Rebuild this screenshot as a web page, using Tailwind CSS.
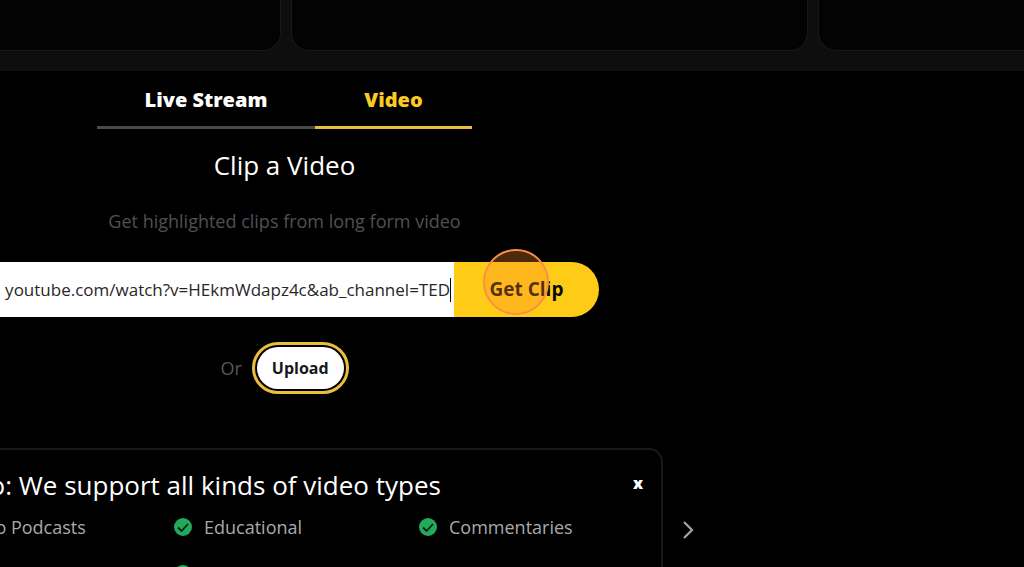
<!DOCTYPE html>
<html lang="en">
<head>
<meta charset="utf-8">
<title>Clip a Video</title>
<script src="https://cdn.jsdelivr.net/npm/@tailwindcss/browser@4"></script>
</head>
<body class="bg-black text-white font-['Open_Sans',sans-serif] h-screen overflow-hidden">
  <header class="bg-[#0e0e0e] pb-5 overflow-hidden">
    <div class="-ml-[237px] flex gap-[10px]">
      <div class="h-[51px] w-[518px] shrink-0 rounded-b-[18px] border border-t-0 border-[#18181b] bg-[#030303]"></div>
      <div class="h-[51px] w-[517px] shrink-0 rounded-b-[18px] border border-t-0 border-[#18181b] bg-[#030303]"></div>
      <div class="h-[51px] w-[518px] shrink-0 rounded-b-[18px] border border-t-0 border-[#18181b] bg-[#030303]"></div>
    </div>
  </header>

  <main class="-ml-[94px] flex w-[757px] flex-col items-center">
    <div role="tablist" class="flex text-xl font-extrabold">
      <button type="button" role="tab" aria-selected="false" class="h-[58px] w-[218px] border-b-3 border-[#4a4a4c] pt-0.5">Live Stream</button>
      <button type="button" role="tab" aria-selected="true" class="h-[58px] w-[157px] border-b-3 border-[#e9be3b] pt-0.5 text-[#fbca24]">Video</button>
    </div>

    <h1 class="mt-5 text-[26px] leading-8">Clip a Video</h1>
    <p class="mt-7 text-lg leading-6 text-[#4f5155]">Get highlighted clips from long form video</p>

    <form class="mt-[29px] flex h-[55px] w-[629px]">
      <label for="url" class="sr-only">Video link</label>
      <div class="relative flex min-w-0 flex-1">
        <input id="url" type="text" value="youtube.com/watch?v=HEkmWdapz4c&amp;ab_channel=TED" class="min-w-0 flex-1 rounded-l-full bg-white pr-1 text-right text-[17px] text-[#27272a] outline-none">
        <span class="absolute top-4 right-[3px] h-6 w-px bg-black"></span>
      </div>
      <button type="button" class="relative w-[145px] rounded-r-full bg-[#fecb17] text-[19px] font-bold text-[#0c0a04]">Get Clip
        <span class="absolute -top-[13px] left-[29px] size-[66px] rounded-full border-2 border-[#f98f45] bg-[#ff8c2e]/30"></span>
      </button>
    </form>

    <div class="mt-[25px] flex items-center gap-[10px]">
      <span class="text-lg text-[#55575c]">Or</span>
      <button type="button" class="h-[52px] rounded-full border-3 border-[#e9be3b] p-[2px]">
        <span class="flex h-full items-center rounded-full bg-white px-[15px] font-bold text-[#18181b]">Upload</span>
      </button>
    </div>

    <section class="relative mt-[54px] h-[200px] w-full rounded-[14px] border-2 border-[#18181b] pt-[17px] pl-[21px]">
      <div class="flex items-start justify-between pr-[18px] pl-2">
        <h2 class="text-[26px] leading-9 font-medium whitespace-nowrap">Video: We support all kinds of video types</h2>
        <button type="button" aria-label="Close" class="mt-1 text-base leading-6 font-extrabold">x</button>
      </div>
      <ul class="mt-3 grid grid-cols-[245px_245px_1fr] gap-y-[26px] text-lg leading-6 font-medium whitespace-nowrap text-[#a9a9ab]">
        <li class="flex items-center gap-3"><svg class="size-[18px]" viewBox="0 0 18 18"><circle cx="9" cy="9" r="9" fill="#22a95b"/><path d="M4 9.5 7.5 13 14 6" fill="none" stroke="#06230f" stroke-width="1.8"/></svg>Video Podcasts</li>
        <li class="flex items-center gap-3"><svg class="size-[18px]" viewBox="0 0 18 18"><circle cx="9" cy="9" r="9" fill="#22a95b"/><path d="M4 9.5 7.5 13 14 6" fill="none" stroke="#06230f" stroke-width="1.8"/></svg>Educational</li>
        <li class="flex items-center gap-3"><svg class="size-[18px]" viewBox="0 0 18 18"><circle cx="9" cy="9" r="9" fill="#22a95b"/><path d="M4 9.5 7.5 13 14 6" fill="none" stroke="#06230f" stroke-width="1.8"/></svg>Commentaries</li>
        <li class="col-start-2 flex items-center"><svg class="size-[18px]" viewBox="0 0 18 18"><circle cx="9" cy="9" r="9" fill="#22a95b"/></svg></li>
      </ul>
      <button type="button" aria-label="Next" class="absolute top-[70px] -right-[35px]">
        <svg class="h-5 w-4" viewBox="0 0 16 20" fill="none" stroke="#a6a6a8" stroke-width="2.2"><path d="m4 2 8 8-8 8"/></svg>
      </button>
    </section>
  </main>
</body>
</html>
